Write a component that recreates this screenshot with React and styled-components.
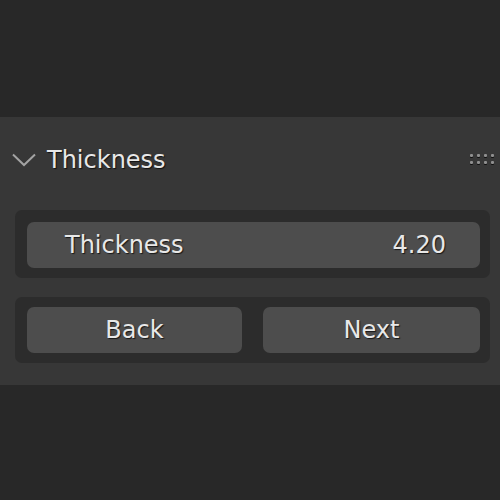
import React from 'react';
import styled, { createGlobalStyle } from "styled-components";

const Global = createGlobalStyle`
  html, body {
    margin: 0;
    padding: 0;
    background: #282828;
  }
  body {
    font-family: "DejaVu Sans", "Liberation Sans", sans-serif;
    color: #e8e8e8;
  }
`;

const Page = styled.div`
  width: 500px;
  height: 500px;
  padding-top: 117px;
  box-sizing: border-box;
  background: #282828;
`;

const Panel = styled.div`
  background: #373737;
  padding: 0 10px 22px 15px;
  display: flex;
  flex-direction: column;
`;

const Header = styled.div`
  height: 86px;
  margin-bottom: 7px;
  margin-left: -15px;
  margin-right: -10px;
  display: flex;
  align-items: center;
  padding: 0 0 0 12px;
`;

const Title = styled.label`
  font-size: 24px;
  margin-left: 11px;
  flex: 1;
  text-shadow: 1px 1px 1px rgba(0, 0, 0, 0.7);
`;

const Grip = styled.div`
  display: grid;
  grid-template-columns: repeat(4, 3px);
  grid-template-rows: repeat(2, 3px);
  gap: 4px;
  margin-right: 6px;
  margin-top: -2px;

  span {
    background: #8f8f8f;
    border-radius: 1px;
    box-shadow: 0 1px 0 #111;
  }
`;

const Box = styled.div`
  background: #2c2c2c;
  border-radius: 7px;
  padding: ${p => p.top || 12}px 10px 10px 12px;
  margin-bottom: ${p => p.gap || 0}px;
`;

const Field = styled.div`
  height: 46px;
  background: #4d4d4d;
  border-radius: 7px;
  display: flex;
  align-items: center;
  justify-content: space-between;
  padding: 0 34px 0 38px;
  font-size: 24px;
  text-shadow: 1px 1px 1px rgba(0, 0, 0, 0.7);
`;

const Buttons = styled.div`
  display: grid;
  grid-template-columns: 215px 1fr;
  gap: 21px;
`;

const Button = styled.div`
  height: 46px;
  background: #4d4d4d;
  border-radius: 7px;
  display: flex;
  align-items: center;
  justify-content: center;
  font-size: 24px;
  text-shadow: 1px 1px 1px rgba(0, 0, 0, 0.7);
`;

function Chevron() {
  return (
    <svg width="24" height="14" viewBox="0 0 24 14">
      <path d="M1 1.5 L12 12 L23 1.5" fill="none" stroke="#a3a3a3" strokeWidth="2" />
    </svg>
  );
}

export default function App() {
  return (
    <Page>
      <Global />
      <Panel>
        <Header>
          <Chevron />
          <Title>Thickness</Title>
          <Grip>
            {Array.from({ length: 8 }).map((_, i) => <span key={i} />)}
          </Grip>
        </Header>
        <Box gap={19}>
          <Field>
            <span>Thickness</span>
            <span>4.20</span>
          </Field>
        </Box>
        <Box top={10}>
          <Buttons>
            <Button>Back</Button>
            <Button>Next</Button>
          </Buttons>
        </Box>
      </Panel>
    </Page>
  );
}
